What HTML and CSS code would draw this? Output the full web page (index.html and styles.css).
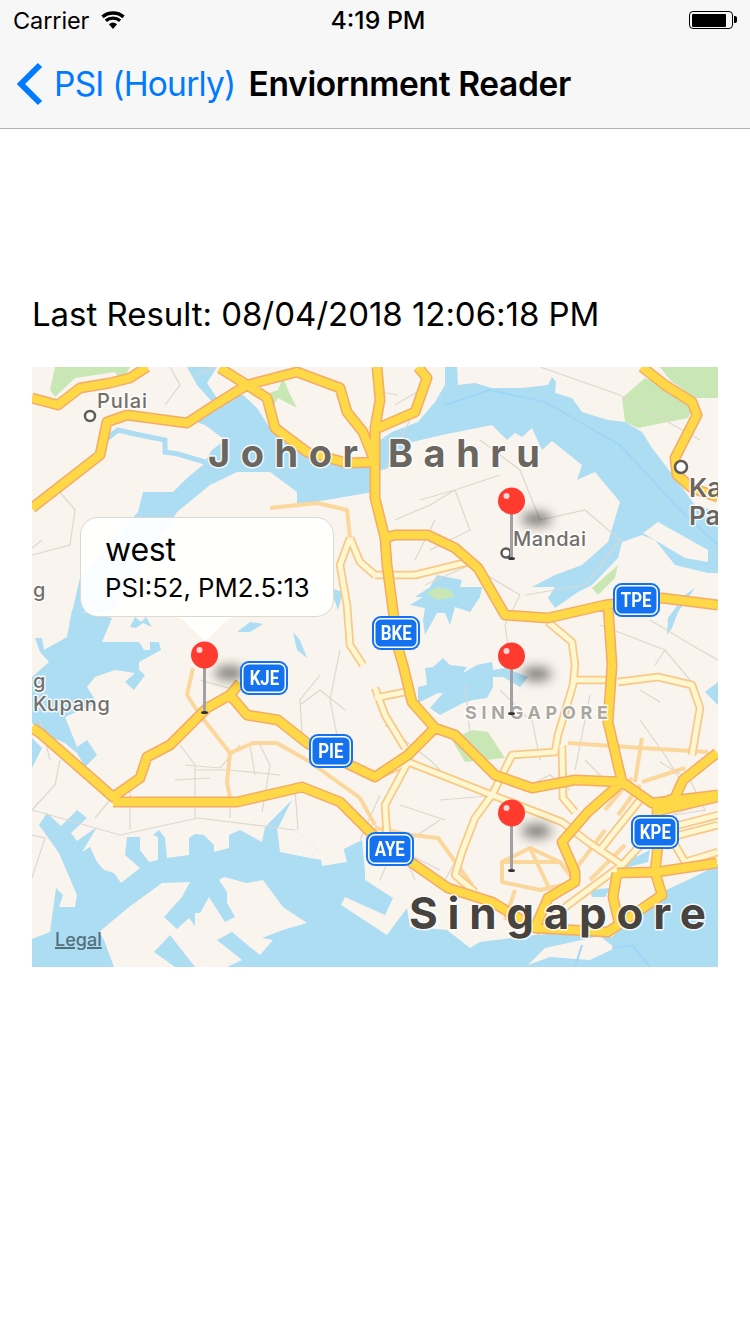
FILE: index.html
```html
<!DOCTYPE html>
<html lang="en">
<head>
<meta charset="utf-8">
<title>Enviornment Reader</title>
<link rel="stylesheet" href="styles.css">
</head>
<body>
<header class="bar">
  <div class="status">
    <div class="status-left">
      <span class="carrier">Carrier</span>
      <svg class="wifi" viewBox="0 0 24 18"><path d="M12 18 7.9 13.3a6.4 6.4 0 0 1 8.2 0ZM5.9 11 3.8 8.6a12.6 12.6 0 0 1 16.4 0L18.100 11a9.500 9.500 0 0 0-12.200 0ZM2.600 7.200.3 4.600a18 18 0 0 1 23.400 0l-2.300 2.600a14.500 14.500 0 0 0-18.800 0Z"/></svg>
    </div>
    <span class="time">4:19 PM</span>
    <div class="battery"><span class="battery-fill"></span></div>
  </div>
  <nav class="nav">
    <svg class="chevron" viewBox="0 0 26 44"><path d="M23 3 4 22l19 19"/></svg>
    <span class="back">PSI (Hourly)</span>
    <span class="title">Enviornment Reader</span>
  </nav>
</header>
<main class="content">
  <p class="result">Last Result: 08/04/2018 12:06:18 PM</p>
  <section class="map">
    <svg class="map-art" viewBox="32 367 686 600">
      <defs>
        <filter id="soft" x="-100%" y="-150%" width="300%" height="400%"><feGaussianBlur stdDeviation="6"/></filter>
        <path id="major" d="M32 398 58 405 80 388 110 383 130 378 147 367M32 508 100 455 107 422 127 415 187 423 210 408 247 385 220 368M247 385 297 372 340 388 347 412 363 432 375 462M247 385 267 398 275 428 307 452 347 463 375 462M378 428 415 412 427 378 418 367M377 367 380 400 375 428 375 498 385 538 387 565 398 648 403 665 412 702 435 728 455 735 495 775 532 788 575 780 622 782 652 803 718 795M385 538 395 535 428 535 455 548 478 568 505 615 548 618 605 605 662 598 718 605M608 605 612 665 608 722 622 782M435 728 408 755 375 777 350 765 307 743 278 720 247 715 230 695 240 683M230 695 207 708 170 745 147 757 140 778 113 797 40 733 32 728M113 802 237 802 302 787 340 802 373 835 415 865 448 888 492 902 535 928 608 932 662 895 655 872 658 845 657 805M535 928 548 898 575 882 575 872 562 842 588 812 622 782M617 873 657 872 717 863M617 873 613 897 620 927M653 812 717 797M657 805 675 798 677 793 683 780 717 753M642 367 665 385 692 402 697 415 675 458 677 475 692 488 718 497"/>
        <path id="minor" d="M375 575 415 575 468 562M548 622 572 642 575 665 573 685 558 735 555 752 512 755 492 795 475 818 462 852 455 875 475 892M375 777 408 762 492 795 562 822 588 842 622 865 568 905 535 932M575 812 563 798 562 745M575 680 608 680M618 682 658 677 692 685 700 708 692 755M375 698 405 692M408 762 385 805 388 852M375 688 385 715 405 748M350 538 340 565 347 605 350 645 363 665M350 538 360 562 375 575M668 828 718 815M668 838 718 825M675 845 685 862 718 852M622 865 650 835M600 850 640 800"/>
        <path id="tan" d="M193 668 187 695 200 715 230 753 227 782 230 798M230 753 253 743 277 743 310 762 360 798 375 825M270 508 317 503 347 510 350 538M568 743 642 748 708 752M642 738 635 782M642 782 685 768M375 828 412 835 438 838 472 885M502 862 530 848 560 862 575 882 540 890 502 882ZM530 848 550 890M502 862 560 862M515 890 505 920M575 870 605 830M590 880 625 845M605 810 632 778M618 815 640 785"/>
      </defs>
      <rect class="land" x="32" y="367" width="686" height="600"/>
      <path class="park" d="M55 367 50 390 55 397 75 378 115 372 122 382 130 367ZM263 395 278 390 283 377 288 390 297 408 278 398 270 412ZM622 398 645 378 668 388 695 405 688 418 638 428 625 422ZM660 367H718V398H695L670 380ZM472 730 488 732 505 758 465 762 452 740ZM592 588 618 565 615 578 598 595Z"/>
      <path class="water" d="M187 367H217L207 383 217 398 243 395 257 408 270 428 297 445 330 458 363 462 373 445 392 432 418 422 435 402 445 385 445 367H457L458 385 475 383 492 388 522 388 548 385 552 377 556 382 555 393 572 398 582 412 608 420 625 422 642 432 652 448 675 478 695 505 718 512V573H708L675 565 655 540 642 535 622 542 618 558 592 585 578 592 555 608 548 598 555 587H532L555 575 582 565 608 542 620 502 595 472 577 480 582 465 552 441 542 450 532 428 522 437 515 433 507 440 492 425 442 435 408 443 388 468 375 472 373 492 297 505 297 492 270 472 237 472 210 485 177 512 112 612H72L80 578 138 512 143 492 173 492 187 478 203 465 212 450 225 440 205 425 190 420 200 412 215 405 197 385Z"/>
      <path class="water" d="M72 610 112 618 102 642H139L144 650H150V642H159L161 650 139 662V670L145 675 134 690 125 682 135 673 115 670 95 677 87 687 97 703 65 717 69 727 77 747 87 740 97 755 85 767 77 753 65 743 42 733 32 723V677L49 662 40 652 35 638H42L44 650 67 637ZM130 627 135 617 141 622 146 617 152 627 143 623 136 628ZM32 738 42 748 32 768Z"/>
      <path class="water-line" d="M108 438 118 430 135 434 165 440 165 452 178 454 205 462"/>
      <path class="water" d="M39 825 47 813 61 826 77 810 87 818 71 833 77 841 97 827 82 852 90 847 97 862 104 870 114 873 121 883 140 868 125 855 127 837H140V850L149 862 158 860V837L153 835 159 830 165 838 167 858 189 855V838L195 834 204 835 214 845V852L229 848V835L240 830 262 842 265 827 292 800 278 828H293L318 850 310 858 322 860 362 840 365 872V880L393 898 385 915 345 897 341 905 387 935 407 908 410 927 447 930 470 948 480 942 535 935 575 932 612 937 662 892 692 878 718 865V967H32V939L50 932 56 888 63 895 59 907H75L77 895 59 853Z"/>
      <path class="land" d="M277 828H293L318 850 310 858 280 852ZM320 852 342 843 347 862 322 866ZM99 932 129 907 162 883 190 882 182 897 164 917 177 929 189 918 195 926V913H200L209 897 225 922 235 917 227 903V892L219 880 224 877 247 883 263 880 283 907 307 923 283 930 262 938 273 940 260 955 250 947 232 932 217 940 242 960 227 967H195L170 935 154 952 175 967H114L104 940ZM528 965 545 948 600 936 615 948 590 960 550 957Z"/>
      <path class="water" d="M437 575 462 580 460 587H482L480 597 470 612 455 607 450 625 445 613H437L425 635 423 620 425 608 410 605 423 597H415L430 587ZM443 658 450 665 467 667 463 673 477 665 492 662 493 670 505 668 528 677 520 687 503 677H493V687L487 698 473 700 463 703 440 715 430 708 443 693H438L418 703V687L427 685 425 668 433 667ZM237 632 250 622 263 624 250 632ZM293 632 300 640 307 658 297 650ZM330 588 343 592 338 610ZM667 635 668 618 685 595 695 588 678 612 672 628ZM705 692 718 682V705ZM623 862 640 855 650 850 648 862 625 868ZM590 890 610 888 605 897 592 897Z"/>
      <path class="park" d="M427 593 437 587 450 590 455 597 437 600Z"/>
      <path class="land" d="M643 533 658 522 708 550V562L685 558Z"/>
      <path class="river" d="M445 405 490 390 545 402 620 445 680 510 718 545M575 967 582 945M650 967 632 945 612 948"/>
      <path class="grid" d="M170 367 180 385 165 405M215 367 195 375M58 490 75 510 70 545 32 555M32 548 42 540M395 405 417 392M375 391 398 395M385 470 410 420M540 367 620 395 700 440M480 440 520 470 540 520 585 510 620 540 585 585 525 595M420 500 455 490 500 475M395 520 430 505 455 490 470 530 430 550M435 520 415 560M425 585 470 565 520 595M520 595 505 625 510 660M650 620 700 650 718 660M600 625 665 650 690 680M665 650 655 665M200 680 235 690M320 675 300 700 302 735M300 705 320 690 345 710M385 725 430 760 440 770M500 690 530 720M40 720 50 760M60 760 55 785 32 810 120 835 198 818 295 830M32 835 45 838 32 878M95 818 110 800M130 790V830M195 790V818M230 800V818M295 790 298 830M195 770 230 770 280 775M185 765 220 768 240 745M180 745 195 765V800M250 745 255 775M260 745 270 765 265 795 262 812M175 780 210 778M340 650 330 700 340 750M380 795 360 840M375 825 400 845 415 880M395 845 380 880M400 850 440 870M470 835 445 880M530 710 540 760M575 770 590 695M620 795 585 760M660 702 640 690M640 720 665 755 680 780M660 762 690 780M630 830 700 805M675 815 705 810 690 780M465 685 470 735M440 800 500 795M440 820 380 860M400 805 445 820M515 780 530 785 550 775 570 790"/>
      <use class="tan" href="#tan"/>
      <use class="minor-case" href="#minor"/>
      <use class="minor-core" href="#minor"/>
      <use class="major-case" href="#major"/>
      <use class="major-core" href="#major"/>
      <g class="labels">
        <text class="l-city" x="208" y="467" textLength="332">Johor Bahru</text>
        <text class="l-big" x="409" y="929" textLength="297">Singapore</text>
        <text class="l-caps" x="465" y="719" textLength="143">SINGAPORE</text>
        <text class="l-town" x="97" y="408" textLength="50">Pulai</text>
        <text class="l-town" x="33" y="711" textLength="77">Kupang</text>
        <text class="l-town" x="33" y="597">g</text>
        <text class="l-town" x="33" y="688">g</text>
        <text class="l-side" x="689" y="497">Ka</text>
        <text class="l-side" x="689" y="525">Pa</text>
      </g>
      <circle class="dot" cx="90" cy="416" r="5"/>
      <circle class="dot" cx="681" cy="467" r="6"/>
      <g class="pin" transform="translate(204.500 655)">
        <ellipse class="shadow" cx="25" cy="18" rx="15" ry="7" filter="url(#soft)"/>
        <rect class="stick" x="-1.500" y="10" width="3" height="47"/>
        <ellipse class="foot" cx="0" cy="57.500" rx="3.500" ry="1.500"/>
        <circle class="head" r="13.500"/><circle class="shine" cx="-5" cy="-5" r="3"/>
      </g>
      <g class="pin" transform="translate(511.500 501)">
        <ellipse class="shadow" cx="25" cy="18" rx="15" ry="7" filter="url(#soft)"/>
        <text class="l-town" x="1.500" y="45" textLength="73">Mandai</text>
        <circle class="dot" cx="-5.500" cy="52" r="4.500"/>
        <rect class="stick" x="-1.500" y="10" width="3" height="47"/>
        <ellipse class="foot" cx="0" cy="57.500" rx="3.500" ry="1.500"/>
        <circle class="head" r="13.500"/><circle class="shine" cx="-5" cy="-5" r="3"/>
      </g>
      <g class="pin" transform="translate(511.500 656)">
        <ellipse class="shadow" cx="25" cy="18" rx="15" ry="7" filter="url(#soft)"/>
        <rect class="stick" x="-1.500" y="10" width="3" height="47"/>
        <ellipse class="foot" cx="0" cy="57.500" rx="3.500" ry="1.500"/>
        <circle class="head" r="13.500"/><circle class="shine" cx="-5" cy="-5" r="3"/>
      </g>
      <g class="pin" transform="translate(511.500 813)">
        <ellipse class="shadow" cx="25" cy="18" rx="15" ry="7" filter="url(#soft)"/>
        <rect class="stick" x="-1.500" y="10" width="3" height="47"/>
        <ellipse class="foot" cx="0" cy="57.500" rx="3.500" ry="1.500"/>
        <circle class="head" r="13.500"/><circle class="shine" cx="-5" cy="-5" r="3"/>
      </g>
    </svg>
    <span class="shield s-kje"><b>KJE</b></span>
    <span class="shield s-bke"><b>BKE</b></span>
    <span class="shield s-tpe"><b>TPE</b></span>
    <span class="shield s-pie"><b>PIE</b></span>
    <span class="shield s-aye"><b>AYE</b></span>
    <span class="shield s-kpe"><b>KPE</b></span>
    <div class="callout">
      <div class="callout-title">west</div>
      <div class="callout-sub">PSI:52, PM2.5:13</div>
      <svg class="callout-tip" viewBox="0 0 68 24"><path d="M0 0C12 0 14 4 20 11L34 24 48 11C54 4 56 0 68 0Z"/></svg>
    </div>
    <span class="legal">Legal</span>
  </section>
</main>
</body>
</html>
```
FILE: styles.css
```css
html, body { margin: 0; padding: 0; background: #fff; }
body { width: 750px; height: 1334px; overflow: hidden; font-family: Inter, Roboto, "Liberation Sans", sans-serif; color: #000; }
.bar { box-sizing: border-box; height: 129px; background: #f7f7f7; border-bottom: 1px solid #b2b2b2; }
.status { height: 40px; display: grid; grid-template-columns: 1fr auto 1fr; align-items: center; padding: 0 17px 0 13px; }
.status-left { display: flex; align-items: center; gap: 12px; }
.carrier { font-size: 23.500px; letter-spacing: -.1px; }
.wifi { width: 24px; height: 18px; fill: #000; }
.time { font-weight: 500; font-size: 24.800px; transform: translateX(5px); }
.battery { justify-self: end; width: 44px; height: 18px; box-sizing: border-box; border: 1.500px solid #000; border-radius: 4px; padding: 1.500px; position: relative; }
.battery::after { content: ""; position: absolute; right: -5px; top: 4px; width: 3px; height: 7px; background: #000; border-radius: 0 2px 2px 0; }
.battery-fill { display: block; width: 34px; height: 100%; background: #000; border-radius: 1px; }
.nav { height: 88px; display: flex; align-items: center; padding-left: 17px; }
.chevron { width: 26px; height: 44px; fill: none; stroke: #007aff; stroke-width: 6; flex: none; }
.back { margin-left: 11px; color: #007aff; font-size: 33.500px; letter-spacing: -.77px; }
.title { margin-left: 13px; font-size: 33.500px; font-weight: 600; letter-spacing: -.35px; }
.content { padding: 0 32px; }
.result { margin: 0; padding-top: 165px; height: 73px; font-size: 33px; line-height: 40px; letter-spacing: -.04px; }
.map { position: relative; width: 686px; height: 600px; overflow: hidden; }
.map-art { display: block; width: 686px; height: 600px; font-family: Inter, Roboto, sans-serif; }
.land { fill: #f9f4ed; }
.park { fill: #c9e7b4; }
.water { fill: #acddf3; }
.water-line { fill: none; stroke: #acddf3; stroke-width: 5; }
.river { fill: none; stroke: #9fd6f6; stroke-width: 2; }
.grid { fill: none; stroke: #dcd8d0; stroke-width: 1.200; }
.tan { fill: none; stroke: #fbd79b; stroke-width: 4; stroke-linejoin: round; }
.minor-case { fill: none; stroke: #f8c987; stroke-width: 8.500; stroke-linejoin: round; }
.minor-core { fill: none; stroke: #fff7d2; stroke-width: 5; stroke-linejoin: round; }
.major-case { fill: none; stroke: #f4ab68; stroke-width: 11; stroke-linejoin: round; }
.major-core { fill: none; stroke: #fed846; stroke-width: 8; stroke-linejoin: round; }
.labels text, .pin text { paint-order: stroke; stroke: rgba(255,255,255,.85); stroke-width: 3px; stroke-linejoin: round; }
.l-city { font-size: 38px; font-weight: 700; fill: #6b6660; }
.l-big { font-size: 44px; font-weight: 700; fill: #47433e; }
.l-caps { font-size: 18px; font-weight: 700; fill: #aaa7a1; }
.l-town { font-size: 20px; font-weight: 500; fill: #726f69; }
.l-side { font-size: 26px; font-weight: 600; fill: #6b6660; }
.dot { fill: #fff; stroke: #5f5c57; stroke-width: 2.500; }
.shadow { fill: #000; opacity: .5; }
.stick { fill: #9fa1a5; }
.foot { fill: #333; }
.head { fill: #ff3b30; }
.shine { fill: #ffd9d6; }
.shield { position: absolute; box-sizing: border-box; height: 34px; background: #1471f0; border-radius: 9px; color: #fff; font-family: Roboto, sans-serif; font-size: 21px; display: flex; align-items: center; justify-content: center; box-shadow: inset 0 0 0 2px #1471f0, inset 0 0 0 3.500px #fff; }
.shield b { display: inline-block; font-weight: 700; transform: scaleX(.8); }
.s-kje { left: 208px; top: 294px; width: 48px; }
.s-bke { left: 340px; top: 249px; width: 48px; }
.s-tpe { left: 581px; top: 216px; width: 47px; }
.s-pie { left: 277px; top: 367px; width: 44px; }
.s-aye { left: 334px; top: 465px; width: 48px; }
.s-kpe { left: 599px; top: 448px; width: 48px; }
.callout { position: absolute; left: 48px; top: 150px; box-sizing: border-box; width: 254px; height: 100px; padding: 13px 0 0 24px; background: rgba(255,255,255,.94); border: 1px solid #ddd9d2; border-radius: 18px; }
.callout-title { font-size: 32px; line-height: 38px; letter-spacing: -.2px; }
.callout-sub { margin-top: 4px; font-size: 25.700px; line-height: 30px; }
.callout-tip { position: absolute; left: 90px; top: 99px; width: 68px; height: 24px; fill: rgba(255,255,255,.94); }
.legal { position: absolute; left: 23px; top: 562px; font-size: 18px; line-height: 22px; font-weight: 500; color: #54707c; text-decoration: underline; text-decoration-thickness: 2px; }
```
